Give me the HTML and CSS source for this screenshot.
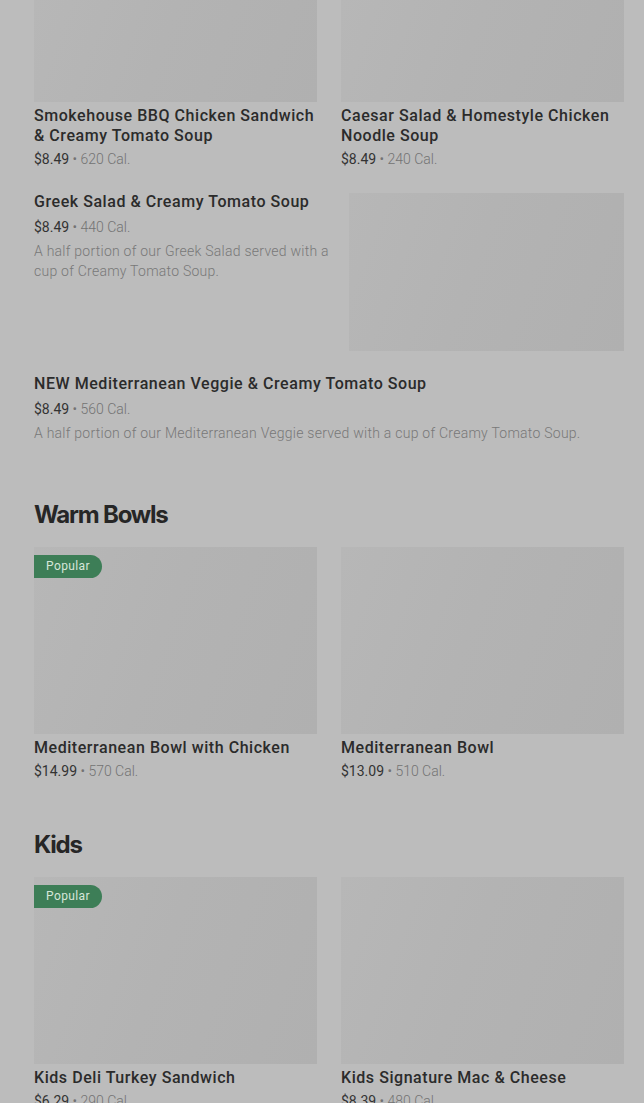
FILE: index.html
```html
<!DOCTYPE html>
<html lang="en">
<head>
<meta charset="utf-8">
<title>Menu</title>
<link rel="stylesheet" href="styles.css">
</head>
<body>
<main class="menu">
  <div class="grid">
    <div class="card">
      <div class="thumb thumb-top"></div>
      <div class="title">Smokehouse BBQ Chicken Sandwich &amp; Creamy Tomato Soup</div>
      <div class="meta"><span class="price">$8.49</span> • 620 Cal.</div>
    </div>
    <div class="card">
      <div class="thumb thumb-top"></div>
      <div class="title">Caesar Salad &amp; Homestyle Chicken Noodle Soup</div>
      <div class="meta"><span class="price">$8.49</span> • 240 Cal.</div>
    </div>
  </div>

  <div class="row row-greek">
    <div class="row-text">
      <div class="title">Greek Salad &amp; Creamy Tomato Soup</div>
      <div class="meta meta-row"><span class="price">$8.49</span> • 440 Cal.</div>
      <div class="desc">A half portion of our Greek Salad served with a cup of Creamy Tomato Soup.</div>
    </div>
    <div class="thumb thumb-row"></div>
  </div>

  <div class="row row-single">
    <div class="row-text">
      <div class="title">NEW Mediterranean Veggie &amp; Creamy Tomato Soup</div>
      <div class="meta meta-row"><span class="price">$8.49</span> • 560 Cal.</div>
      <div class="desc">A half portion of our Mediterranean Veggie served with a cup of Creamy Tomato Soup.</div>
    </div>
  </div>

  <h2 class="section-title section-warm">Warm Bowls</h2>
  <div class="grid">
    <div class="card">
      <div class="thumb thumb-card"><span class="badge">Popular</span></div>
      <div class="title">Mediterranean Bowl with Chicken</div>
      <div class="meta"><span class="price">$14.99</span> • 570 Cal.</div>
    </div>
    <div class="card">
      <div class="thumb thumb-card"></div>
      <div class="title">Mediterranean Bowl</div>
      <div class="meta"><span class="price">$13.09</span> • 510 Cal.</div>
    </div>
  </div>

  <h2 class="section-title section-kids">Kids</h2>
  <div class="grid">
    <div class="card">
      <div class="thumb thumb-card"><span class="badge">Popular</span></div>
      <div class="title">Kids Deli Turkey Sandwich</div>
      <div class="meta"><span class="price">$6.29</span> • 290 Cal.</div>
    </div>
    <div class="card">
      <div class="thumb thumb-card"></div>
      <div class="title">Kids Signature Mac &amp; Cheese</div>
      <div class="meta"><span class="price">$8.39</span> • 480 Cal.</div>
    </div>
  </div>
</main>
</body>
</html>
```

FILE: styles.css
```css
html, body {
  margin: 0;
  padding: 0;
  background: #bcbcbc;
}

body {
  font-family: Roboto, "Liberation Sans", sans-serif;
  color: #2a2a2a;
  height: 1103px;
  overflow: hidden;
}

.menu {
  padding: 0 20px 0 34px;
}

.grid {
  display: grid;
  grid-template-columns: 283px 283px;
  column-gap: 24px;
}

.card {
  display: flex;
  flex-direction: column;
}

.thumb {
  position: relative;
  background: linear-gradient(110deg, #b7b7b7 0%, #b3b3b3 45%, #b0b0b0 100%);
}

.thumb-top {
  height: 102px;
}

.thumb-card {
  height: 187px;
}

.title {
  font-size: 16px;
  font-weight: 500;
  line-height: 20px;
  color: #2b2b2b;
  margin-top: 4px;
  letter-spacing: 0.55px;
}

.meta {
  font-size: 14px;
  line-height: 20px;
  font-weight: 300;
  color: #737373;
  margin-top: 3px;
}

.price {
  color: #333333;
  font-weight: 400;
}

.meta-row {
  margin-top: 5px;
}

.desc {
  font-size: 14px;
  line-height: 20px;
  font-weight: 300;
  color: #787878;
  margin-top: 4px;
  letter-spacing: 0.25px;
}

.row {
  display: grid;
  grid-template-columns: 1fr 275px;
  column-gap: 16px;
}

.row .title {
  margin-top: 0;
}

.row-greek {
  margin-top: 23px;
}

.row-single {
  grid-template-columns: 1fr;
  margin-top: 23px;
}

.thumb-row {
  height: 158px;
  margin-top: 1px;
}

.section-title {
  margin: 0;
  font-family: Inter, Roboto, sans-serif;
  font-size: 24px;
  font-weight: 700;
  line-height: 32px;
  letter-spacing: -1.2px;
  color: #262626;
}

.section-warm {
  margin-top: 56px;
  margin-bottom: 16px;
}

.section-kids {
  margin-top: 48px;
  margin-bottom: 16px;
}

.badge {
  position: absolute;
  top: 8px;
  left: 0;
  height: 23px;
  line-height: 23px;
  padding: 0 12px;
  font-size: 12px;
  font-weight: 400;
  letter-spacing: 0.4px;
  color: #d6e6da;
  background: #3d7e57;
  border-radius: 0 12px 12px 0;
}
```
